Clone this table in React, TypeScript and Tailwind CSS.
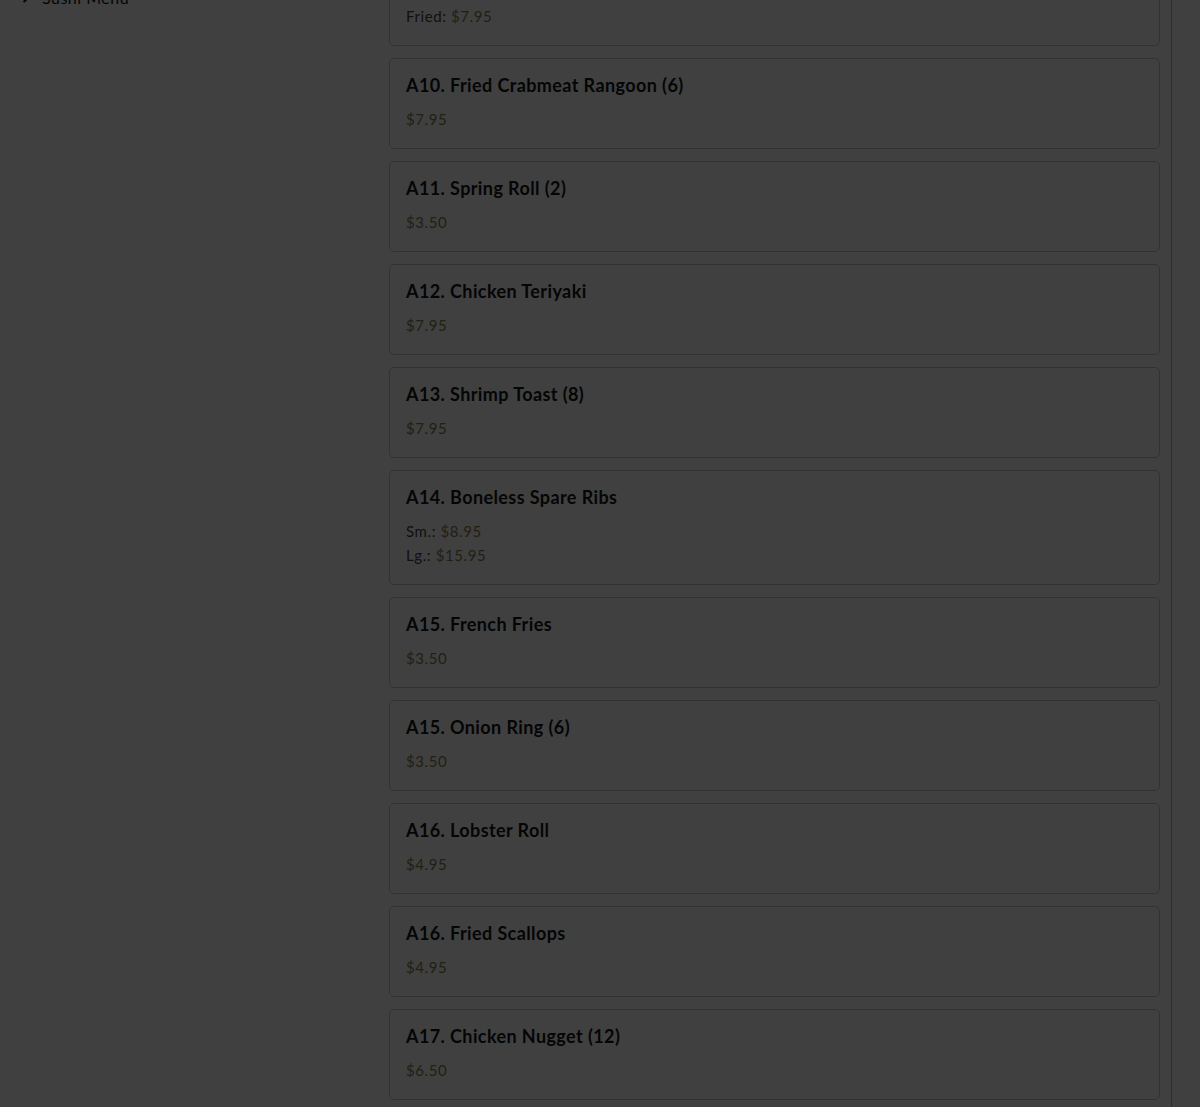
import { ChevronRight } from "lucide-react";

type Price = { label?: string; value: string };
type Item = { name: string; prices: Price[] };

const items: Item[] = [
  { name: "A9. Dumplings (8)", prices: [{ label: "Steamed", value: "$7.95" }, { label: "Fried", value: "$7.95" }] },
  { name: "A10. Fried Crabmeat Rangoon (6)", prices: [{ value: "$7.95" }] },
  { name: "A11. Spring Roll (2)", prices: [{ value: "$3.50" }] },
  { name: "A12. Chicken Teriyaki", prices: [{ value: "$7.95" }] },
  { name: "A13. Shrimp Toast (8)", prices: [{ value: "$7.95" }] },
  { name: "A14. Boneless Spare Ribs", prices: [{ label: "Sm.", value: "$8.95" }, { label: "Lg.", value: "$15.95" }] },
  { name: "A15. French Fries", prices: [{ value: "$3.50" }] },
  { name: "A15. Onion Ring (6)", prices: [{ value: "$3.50" }] },
  { name: "A16. Lobster Roll", prices: [{ value: "$4.95" }] },
  { name: "A16. Fried Scallops", prices: [{ value: "$4.95" }] },
  { name: "A17. Chicken Nugget (12)", prices: [{ value: "$6.50" }] },
  { name: "A18. Chicken Wings (6)", prices: [{ value: "$7.95" }] },
];

function MenuCard({ item }: { item: Item }) {
  return (
    <div className="border border-[#c8c8c8] rounded-[5px] bg-white px-4 pt-[14px] pb-[17px]">
      <h3 className="text-[18px] leading-[24px] font-bold tracking-[0.4px] text-[#161616]">{item.name}</h3>
      <div className="mt-[10px]">
        {item.prices.map((p, i) => (
          <p key={i} className="text-[15px] leading-[24px] tracking-[0.6px] text-[#444]">
            {p.label && <span>{p.label}: </span>}
            <span className="text-[#86814c]">{p.value}</span>
          </p>
        ))}
      </div>
    </div>
  );
}

export default function App() {
  return (
    <div className="relative h-[1107px] overflow-hidden bg-white" style={{ fontFamily: "Lato, 'Noto Sans', sans-serif" }}>
      <div className="flex -mt-[69px]">
        {/* Categories */}
        <aside className="w-[389px] shrink-0 pt-[55px] pl-[19px]">
          <div className="flex items-center gap-[9px] text-[16px] leading-[24px] tracking-[0.5px] text-[#111]">
            <ChevronRight size={14} strokeWidth={3.5} />
            <span>Sushi Menu</span>
          </div>
        </aside>

        {/* Items */}
        <main className="w-[783px] pr-[11px] border-r border-[#bcbcbc] min-h-[1300px]">
          <div className="flex flex-col gap-[12px]">
            {items.map((it) => (
              <MenuCard key={it.name} item={it} />
            ))}
          </div>
        </main>
      </div>

      {/* modal backdrop */}
      <div className="absolute inset-0 bg-black/75" />
    </div>
  );
}
